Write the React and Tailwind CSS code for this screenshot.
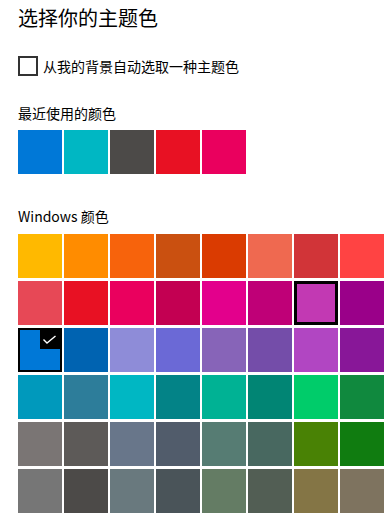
import React from "react";

const recent = ["#0078D7", "#00B7C3", "#4C4A48", "#E81123", "#EA005E"];

const windowsColors = [
  "#FFB900", "#FF8C00", "#F7630C", "#CA5010", "#DA3B01", "#EF6950", "#D13438", "#FF4343",
  "#E74856", "#E81123", "#EA005E", "#C30052", "#E3008C", "#BF0077", "#C239B3", "#9A0089",
  "#0078D7", "#0063B1", "#8E8CD8", "#6B69D6", "#8764B8", "#744DA9", "#B146C2", "#881798",
  "#0099BC", "#2D7D9A", "#00B7C3", "#038387", "#00B294", "#018574", "#00CC6A", "#10893E",
  "#7A7574", "#5D5A58", "#68768A", "#515C6B", "#567C73", "#486860", "#498205", "#107C10",
  "#767676", "#4C4A48", "#69797E", "#4A5459", "#647C64", "#525E54", "#847545", "#7E735F",
];

const SELECTED = 16; // blue, row 3
const HOVERED = 14; // purple, row 2

const Swatch = ({ color, selected, hovered }) => {
  if (selected) {
    return (
      <div
        className="relative w-[44px] h-[44px] border-2 border-black"
        style={{ backgroundColor: color }}
      >
        {/* check badge */}
        <div className="absolute top-0 right-0 w-[20px] h-[19px] bg-black flex items-center justify-center">
          <svg width="20" height="19" viewBox="0 0 20 19">
            <path
              d="M3.5 9.5 L7 13 L15.5 6"
              fill="none"
              stroke="white"
              strokeWidth="1.4"
            />
          </svg>
        </div>
      </div>
    );
  }
  return (
    <div
      className={
        hovered
          ? "w-[44px] h-[44px] border-[3px] border-black"
          : "w-[44px] h-[44px]"
      }
      style={{ backgroundColor: color }}
    />
  );
};

export default function App() {
  return (
    <div
      className="w-[386px] h-[514px] bg-white text-black overflow-hidden pl-[18px] pt-[4px]"
      style={{ fontFamily: '"Noto Sans CJK SC", "Noto Sans", sans-serif' }}
    >
      {/* Title */}
      <div className="text-[20px] leading-[28px]">选择你的主题色</div>

      {/* Auto pick checkbox */}
      <div className="flex items-center mt-[24px] h-[20px]">
        <div className="w-[20px] h-[20px] border-2 border-[#333333]" />
        <span className="ml-[5px] text-[14px] leading-[20px]">
          从我的背景自动选取一种主题色
        </span>
      </div>

      {/* Recent colours */}
      <div className="mt-[27px] text-[14px] leading-[20px]">最近使用的颜色</div>
      <div className="flex gap-[2px] mt-[7px]">
        {recent.map((c, i) => (
          <Swatch key={i} color={c} />
        ))}
      </div>

      {/* Windows colours */}
      <div className="mt-[32px] text-[14px] leading-[20px]">Windows 颜色</div>
      <div className="grid grid-cols-[repeat(8,44px)] gap-x-[2px] gap-y-[3px] mt-[8px]">
        {windowsColors.map((c, i) => (
          <Swatch
            key={i}
            color={c}
            selected={i === SELECTED}
            hovered={i === HOVERED}
          />
        ))}
      </div>
    </div>
  );
}
